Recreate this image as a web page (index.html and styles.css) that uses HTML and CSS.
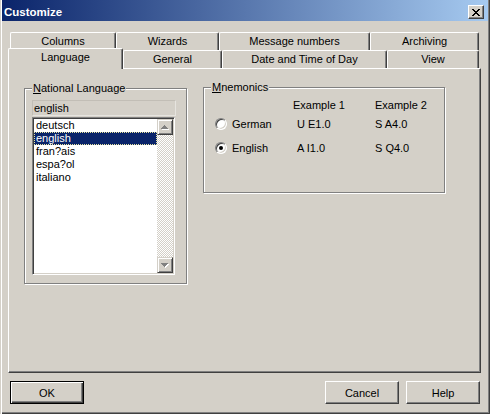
FILE: index.html
```html
<!DOCTYPE html>
<html>
<head>
<meta charset="utf-8">
<title>Customize</title>
<link rel="stylesheet" href="styles.css">
</head>
<body>
<div class="window">
  <div class="titlebar">
    <span class="title">Customize</span>
    <span class="close"><svg width="8" height="7" viewBox="0 0 8 7" shape-rendering="crispEdges"><path d="M0 0h2v1h1v1h2V1h1V0h2v1H7v1H6v1H5v1h1v1h1v1h1v1H6V6H5V5H3v1H2v1H0V6h1V5h1V4h1V3H2V2H1V1H0z" fill="#000"/></svg></span>
  </div>

  <div class="tabs">
    <div class="tabrow back">
      <div class="tab t-columns">Columns</div>
      <div class="tab t-wizards">Wizards</div>
      <div class="tab t-msg">Message numbers</div>
      <div class="tab t-arch">Archiving</div>
    </div>
    <div class="tabrow front">
      <div class="tab sel t-lang">Language</div>
      <div class="tab t-general">General</div>
      <div class="tab t-date">Date and Time of Day</div>
      <div class="tab t-view">View</div>
    </div>
  </div>

  <div class="panel">
    <div class="group natlang">
      <span class="legend"><u>N</u>ational Language</span>
      <div class="combo">english</div>
      <div class="listbox">
        <ul class="items">
          <li>deutsch</li>
          <li class="sel">english</li>
          <li>fran?ais</li>
          <li>espa?ol</li>
          <li>italiano</li>
        </ul>
        <div class="vscroll">
          <div class="sbtn"><svg width="8" height="5" viewBox="0 0 8 5" shape-rendering="crispEdges"><path transform="translate(1 1)" d="M3 0h1v1h1v1h1v1h1v1H0V3h1V2h1V1h1z" fill="#fff"/><path d="M3 0h1v1h1v1h1v1h1v1H0V3h1V2h1V1h1z" fill="#808080"/></svg></div>
          <div class="track"></div>
          <div class="sbtn"><svg width="8" height="5" viewBox="0 0 8 5" shape-rendering="crispEdges"><path transform="translate(1 1)" d="M0 0h7v1H6v1H5v1H4v1H3V3H2V2H1V1H0z" fill="#fff"/><path d="M0 0h7v1H6v1H5v1H4v1H3V3H2V2H1V1H0z" fill="#808080"/></svg></div>
        </div>
      </div>
    </div>

    <div class="group mnem">
      <span class="legend"><u>M</u>nemonics</span>
      <div class="mgrid">
        <span></span><span></span><span>Example 1</span><span>Example 2</span>
        <span class="radio"></span><span>German</span><span class="val">U E1.0</span><span>S A4.0</span>
        <span class="radio on"></span><span>English</span><span class="val">A I1.0</span><span>S Q4.0</span>
      </div>
    </div>
  </div>

  <div class="buttons">
    <div class="btn ok">OK</div>
    <div class="btn cancel">Cancel</div>
    <div class="btn help">Help</div>
  </div>
</div>
</body>
</html>
```
FILE: styles.css
```css
html, body {
  margin: 0;
  padding: 0;
  background: #d4d0c8;
}

body {
  font-family: "Liberation Sans", Arial, sans-serif;
  font-size: 11px;
  color: #000;
}

.window {
  width: 490px;
  height: 414px;
  box-sizing: border-box;
  background: #d4d0c8;
  display: flex;
  flex-direction: column;
  overflow: hidden;
  box-shadow: inset 1px 0 0 #d4d0c8, inset 2px 0 0 #fff, inset -1px -1px 0 #404040, inset -2px -2px 0 #808080;
}

/* Title bar */
.titlebar {
  margin: 0 2px;
  height: 21px;
  flex: none;
  background: linear-gradient(to right, #0a246a, #a6caf0);
  display: flex;
  align-items: flex-start;
}

.title {
  flex: 1;
  color: #fff;
  font-weight: bold;
  font-size: 11.5px;
  line-height: 17px;
  padding: 4px 0 0 2px;
}

.close {
  width: 16px;
  height: 14px;
  margin: 5px 4px 0 0;
  box-sizing: border-box;
  background: #d4d0c8;
  border: 1px solid;
  border-color: #fff #404040 #404040 #fff;
  box-shadow: inset -1px -1px 0 #808080;
  display: flex;
  align-items: center;
  justify-content: center;
}

.close svg { display: block; }

/* Tabs */
.tabs {
  margin-top: 11px;
  flex: none;
}

.tabrow {
  display: flex;
  height: 18px;
}

.tabrow.back { padding-left: 10px; }
.tabrow.front { padding-left: 8px; align-items: flex-end; }

.tab {
  flex: none;
  box-sizing: border-box;
  height: 18px;
  background: #d4d0c8;
  border-top: 1px solid #fff;
  border-left: 1px solid #fff;
  border-right: 1px solid #404040;
  border-radius: 2px 2px 0 0;
  box-shadow: inset -1px 0 0 #808080;
  text-align: center;
  line-height: 16px;
  white-space: nowrap;
}

.tab.sel {
  height: 21px;
  margin-bottom: -1px;
  position: relative;
  z-index: 1;
  line-height: 17px;
  padding-bottom: 3px;
}

.t-columns { width: 106px; }
.t-wizards { width: 103px; }
.t-msg { width: 151px; }
.t-arch { width: 109px; }
.t-lang { width: 115px; }
.t-general { width: 99px; }
.t-date { width: 165px; }
.t-view { width: 92px; }

/* Panel */
.panel {
  flex: none;
  margin-left: 8px;
  width: 473px;
  height: 305px;
  box-sizing: border-box;
  border: 1px solid;
  border-color: #fff #404040 #404040 #fff;
  box-shadow: inset -1px -1px 0 #808080;
  padding: 19px 0 0 15px;
  display: flex;
  align-items: flex-start;
  gap: 16px;
}

.group {
  position: relative;
  box-sizing: border-box;
  border: 1px solid #808080;
  box-shadow: inset 1px 1px 0 #fff, 1px 1px 0 #fff;
}

.legend {
  position: absolute;
  top: -7px;
  left: 7px;
  padding: 0 1px;
  background: #d4d0c8;
  line-height: 13px;
  white-space: nowrap;
}

.natlang {
  width: 163px;
  height: 196px;
  padding: 11px 0 0 7px;
}

.combo {
  width: 144px;
  height: 16px;
  box-sizing: border-box;
  border: 1px solid;
  border-color: #c2beb6 #e6e4df #e6e4df #c2beb6;
  line-height: 14px;
  padding-left: 1px;
}

.listbox {
  width: 143px;
  height: 158px;
  margin-top: 1px;
  box-sizing: border-box;
  border: 1px solid;
  border-color: #808080 #fff #fff #808080;
  box-shadow: inset 1px 1px 0 #404040, inset -1px -1px 0 #d4d0c8;
  background: #fff;
  padding: 1px;
  display: flex;
}

.items {
  list-style: none;
  margin: 0;
  padding: 0;
  flex: 1;
}

.items li {
  height: 13px;
  line-height: 13px;
  padding-left: 2px;
}

.items li.sel {
  background: #0a246a;
  color: #fff;
  outline: 1px dotted #e8e4a0;
  outline-offset: -1px;
}

.vscroll {
  width: 16px;
  display: flex;
  flex-direction: column;
}

.sbtn {
  height: 16px;
  flex: none;
  box-sizing: border-box;
  background: #d4d0c8;
  border: 1px solid;
  border-color: #d4d0c8 #404040 #404040 #d4d0c8;
  box-shadow: inset 1px 1px 0 #fff, inset -1px -1px 0 #808080;
  display: flex;
  align-items: center;
  justify-content: center;
}

.sbtn svg { display: block; }

.track {
  flex: 1;
  background: repeating-conic-gradient(#d4d0c8 0 25%, #fff 0 50%) 0 0 / 2px 2px;
}

/* Mnemonics */
.mnem {
  width: 242px;
  height: 106px;
  margin-top: -1px;
  padding: 9px 0 0 9px;
}

.mgrid {
  display: grid;
  grid-template-columns: 19px 61px 82px auto;
  grid-template-rows: 16px 22px 26px;
  align-items: center;
  white-space: nowrap;
}

.val { padding-left: 4px; }

.radio {
  position: relative;
  margin-left: 2px;
  width: 12px;
  height: 12px;
  box-sizing: border-box;
  border-radius: 50%;
  background: #fff;
  border: 1px solid;
  border-color: #808080 #fff #fff #808080;
  box-shadow: inset 1px 1px 0 #404040, inset -1px -1px 0 #d4d0c8;
}

.radio.on::after {
  content: "";
  position: absolute;
  left: 3px;
  top: 3px;
  width: 4px;
  height: 4px;
  border-radius: 50%;
  background: #000;
}

/* Buttons */
.buttons {
  flex: none;
  display: flex;
  margin-top: 8px;
  padding: 0 10px;
}

.btn {
  width: 74px;
  height: 23px;
  box-sizing: border-box;
  background: #d4d0c8;
  border: 1px solid;
  border-color: #fff #404040 #404040 #fff;
  box-shadow: inset -1px -1px 0 #808080;
  display: flex;
  align-items: center;
  justify-content: center;
}

.btn.ok {
  margin-right: auto;
  border-color: #000;
  box-shadow: inset 1px 1px 0 #fff, inset -1px -1px 0 #404040, inset -2px -2px 0 #808080;
}

.btn.cancel { margin-right: 7px; }
```
